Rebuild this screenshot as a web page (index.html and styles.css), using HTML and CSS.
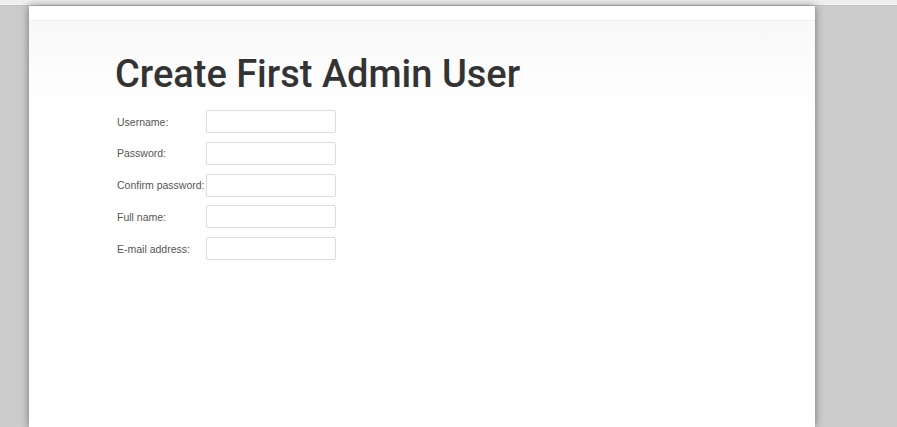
FILE: index.html
```html
<!DOCTYPE html>
<html>
<head>
<meta charset="utf-8">
<link rel="stylesheet" href="styles.css">
</head>
<body>
<div class="topbar"></div>
<div class="stage">
  <div class="panel">
    <div class="panel-head"></div>
    <div class="panel-body">
      <h1 class="title">Create First Admin User</h1>
      <form class="form">
        <div class="row"><label class="label">Username:</label><input class="input" type="text"></div>
        <div class="row"><label class="label">Password:</label><input class="input" type="password"></div>
        <div class="row"><label class="label">Confirm password:</label><input class="input" type="password"></div>
        <div class="row"><label class="label">Full name:</label><input class="input" type="text"></div>
        <div class="row"><label class="label">E-mail address:</label><input class="input" type="text"></div>
      </form>
    </div>
  </div>
</div>
</body>
</html>
```
FILE: styles.css
```css
html, body {
  margin: 0;
  padding: 0;
  height: 100%;
  overflow: hidden;
}
body {
  background: #cccccc;
  font-family: "Liberation Sans", Arial, sans-serif;
}
.topbar {
  height: 5px;
  background: #efefee;
  border-bottom: 1px solid #c4c4c4;
}
.stage {
  padding-left: 29px;
  height: calc(100% - 6px);
}
.panel {
  width: 786px;
  height: 100%;
  background: #ffffff;
  box-shadow: 0 0 8px rgba(0, 0, 0, 0.45);
}
.panel-head {
  height: 14px;
  background: #ffffff;
  border-bottom: 1px solid #f0f0f0;
}
.panel-body {
  padding: 30px 0 0 86px;
  background: linear-gradient(to bottom, #f8f8f8 0px, #fdfdfd 60px, #ffffff 100px);
}
.title {
  margin: 0 0 12px 0;
  font-family: Roboto, sans-serif;
  font-weight: 500;
  font-size: 38px;
  line-height: 47px;
  color: #333333;
}
.form {
  display: flex;
  flex-direction: column;
  gap: 8.75px;
  padding-left: 2px;
}
.row {
  display: flex;
  align-items: center;
  height: 23px;
}
.label {
  width: 89px;
  flex: none;
  white-space: nowrap;
  font-size: 10.5px;
  color: #555555;
}
.input {
  box-sizing: border-box;
  width: 130px;
  height: 23px;
  margin: 0;
  border: 1px solid #dddddd;
  border-radius: 2px;
  background: #ffffff;
  padding: 2px 4px;
}
```
